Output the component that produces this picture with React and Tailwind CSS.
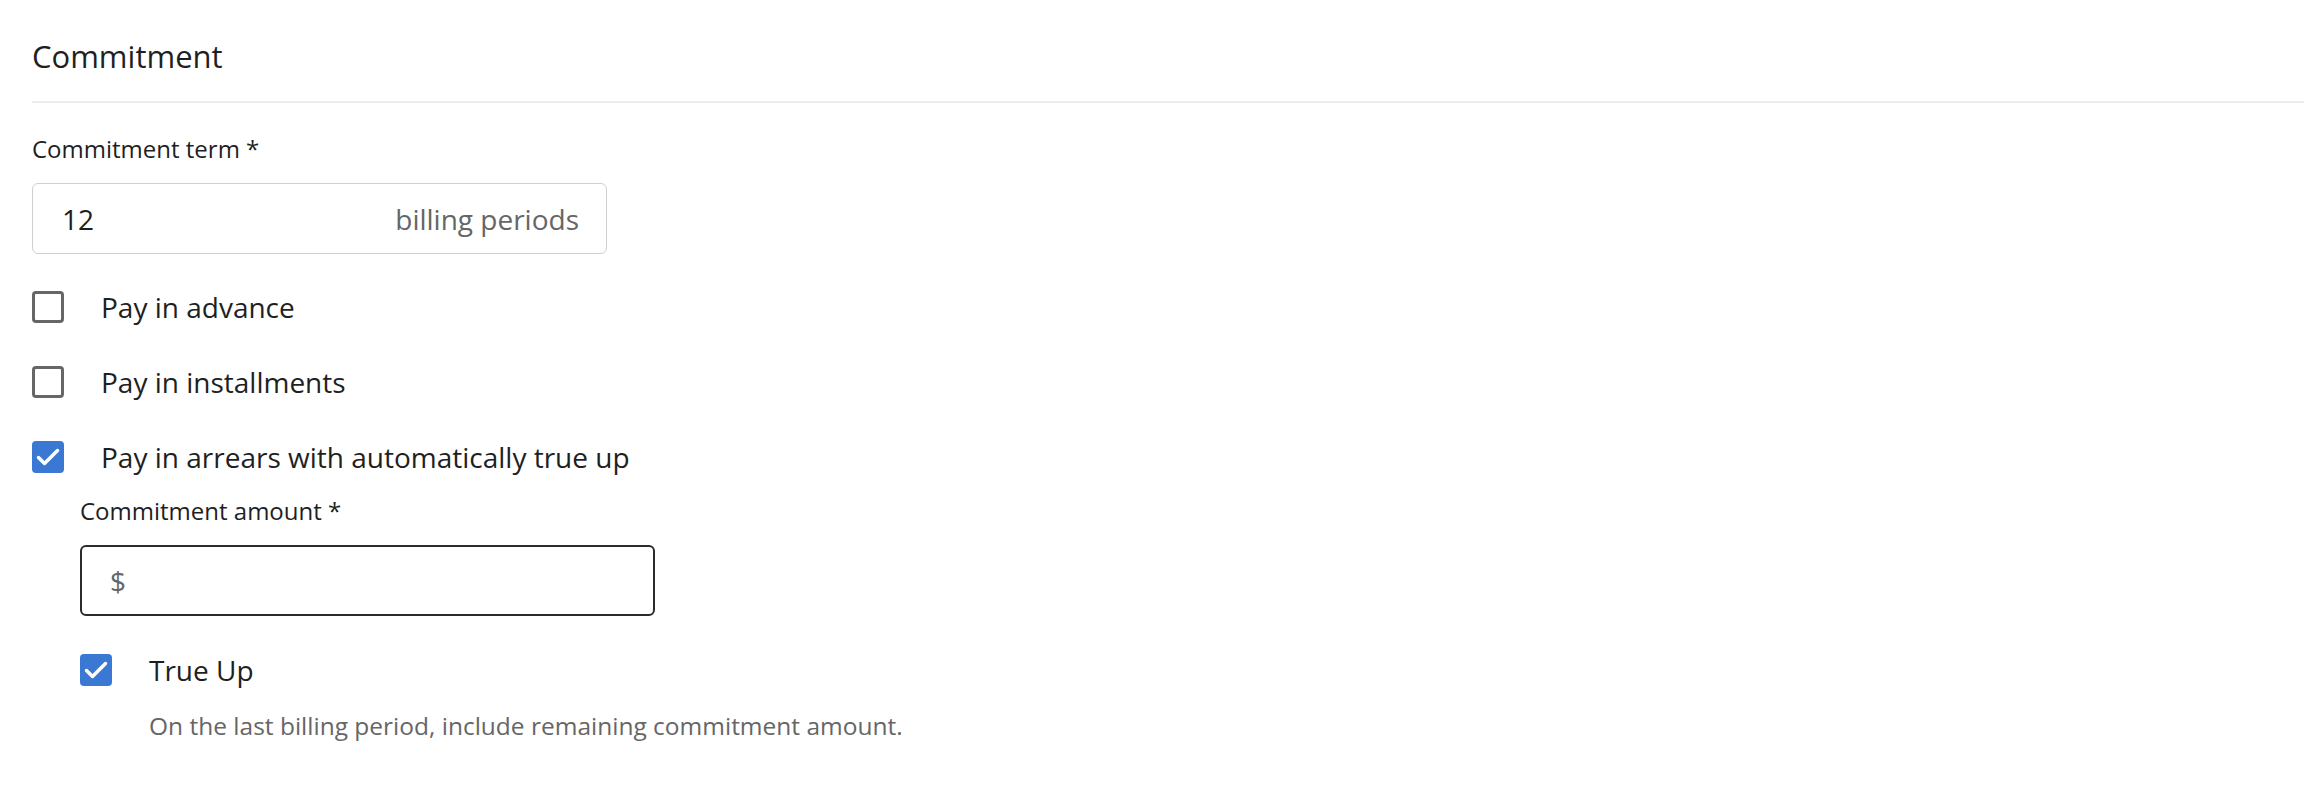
import React, { useState } from 'react';

const font = { fontFamily: '"Open Sans", Lato, sans-serif' };

function CheckIcon() {
  return (
    <svg viewBox="0 0 32 32" className="w-[32px] h-[32px]" fill="none" stroke="white" strokeWidth="3.5" strokeLinecap="round" strokeLinejoin="round">
      <path d="M6.5 16.5l6 6L25.5 9.5" />
    </svg>
  );
}

function Checkbox({ checked, onChange, label }) {
  return (
    <label className="flex items-center gap-[37px] h-[32px] cursor-pointer select-none">
      <span
        onClick={onChange}
        className={`w-[32px] h-[32px] rounded-[4px] flex items-center justify-center flex-shrink-0 ${
          checked ? 'bg-[#3a78d4]' : 'border-[3px] border-[#666666] bg-white'
        }`}
      >
        {checked && <CheckIcon />}
      </span>
      <span className="text-[28px] leading-[32px] text-[#1f1f1f]">{label}</span>
    </label>
  );
}

export default function App() {
  const [advance, setAdvance] = useState(false);
  const [installments, setInstallments] = useState(false);
  const [arrears, setArrears] = useState(true);
  const [trueUp, setTrueUp] = useState(true);

  return (
    <div className="w-full h-[806px] bg-white pl-[32px] pt-[36px]" style={font}>
      {/* Section header */}
      <h2 className="text-[31px] leading-[40px] text-[#1f1f1f] pb-[25px] border-b-2 border-[#ececec]">
        Commitment
      </h2>

      {/* Commitment term */}
      <div className="mt-[32px] text-[24px] leading-[28px] text-[#1f1f1f]">Commitment term *</div>
      <div className="mt-[20px] w-[575px] h-[71px] border border-[#cfcfcf] rounded-[6px] flex items-center justify-between pl-[29px] pr-[27px]">
        <span className="text-[28px] text-[#1f1f1f]">12</span>
        <span className="text-[28px] text-[#666666]">billing periods</span>
      </div>

      {/* Payment options */}
      <div className="mt-[37px] flex flex-col gap-[43px]">
        <Checkbox checked={advance} onChange={() => setAdvance(!advance)} label="Pay in advance" />
        <Checkbox checked={installments} onChange={() => setInstallments(!installments)} label="Pay in installments" />
        <Checkbox checked={arrears} onChange={() => setArrears(!arrears)} label="Pay in arrears with automatically true up" />
      </div>

      {/* Arrears details */}
      <div className="ml-[48px]">
        <div className="mt-[24px] text-[24px] leading-[28px] text-[#1f1f1f]">Commitment amount *</div>
        <div className="mt-[20px] w-[575px] h-[71px] border-2 border-[#2b2b2b] rounded-[6px] flex items-center pl-[28px]">
          <span className="text-[28px] text-[#666666]">$</span>
        </div>
        <div className="mt-[38px]">
          <Checkbox checked={trueUp} onChange={() => setTrueUp(!trueUp)} label="True Up" />
        </div>
        <p className="mt-[26px] ml-[69px] text-[24.5px] leading-[28px] text-[#666666]">
          On the last billing period, include remaining commitment amount.
        </p>
      </div>
    </div>
  );
}
